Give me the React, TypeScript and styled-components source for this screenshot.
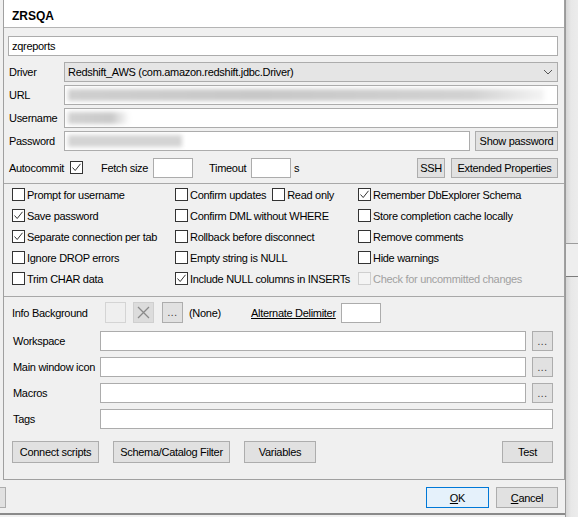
import React from 'react';
import styled, { createGlobalStyle } from 'styled-components';

const GlobalStyle = createGlobalStyle`
  html, body { margin: 0; padding: 0; background: #f0f0f0; }
  body {
    font-family: 'Liberation Sans', Arial, sans-serif;
    font-size: 11px;
    letter-spacing: -0.3px;
    color: #000;
  }
  * { box-sizing: border-box; }
`;

const Page = styled.div`
  width: 578px;
  height: 517px;
  display: flex;
  overflow: hidden;
  background: #f0f0f0;
`;

const Dialog = styled.div`
  width: 566px;
  height: 517px;
  display: flex;
  flex-direction: column;
  border-right: 1px solid #9a9a9a;
`;

const Backdrop = styled.div`
  width: 12px;
  display: flex;
  flex-direction: column;
  background: linear-gradient(to right, #d6d6d6, #e8e8e8 5px, #ececec);
`;

const BackdropBand = styled.div<{ $h: number; $lined?: boolean }>`
  height: ${(p) => p.$h}px;
  flex: ${(p) => (p.$h ? 'none' : 1)};
  border-top: ${(p) => (p.$lined ? '1px solid #9c9c9c' : 'none')};
  border-bottom: ${(p) => (p.$lined ? '1px solid #7c7c7c' : 'none')};
  background: ${(p) => (p.$lined ? '#eeeeee' : 'transparent')};
`;

const Panel = styled.div`
  margin-left: 3px;
  width: 562px;
  height: 480px;
  flex: none;
  display: flex;
  flex-direction: column;
  border-left: 1px solid #a0a0a0;
  border-right: 1px solid #a0a0a0;
  border-bottom: 1px solid #a0a0a0;
`;

const TitleBar = styled.div`
  height: 28px;
  background: #fff;
  border-bottom: 1px solid #b4b4b4;
  padding: 5px 0 0 8px;
  display: flex;
  align-items: center;
  font-weight: bold;
  font-size: 12px;
  letter-spacing: 0;
`;

const FieldsSection = styled.div`
  padding: 8px 6px 5px 4px;
  display: flex;
  flex-direction: column;
  gap: 3px;
  border-bottom: 1px solid #a8a8a8;
`;

const FormRow = styled.div<{ $top?: number }>`
  display: grid;
  grid-template-columns: 56px 1fr;
  align-items: center;
  height: 20px;
  margin-top: ${(p) => p.$top ?? 0}px;
`;

const RowLabel = styled.span`
  padding-left: 1px;
  white-space: nowrap;
`;

const TextBox = styled.div<{ $w?: number; $grow?: boolean }>`
  height: 20px;
  width: ${(p) => (p.$w ? `${p.$w}px` : 'auto')};
  flex: ${(p) => (p.$grow ? 1 : 'none')};
  background: #fff;
  border: 1px solid #acacac;
  display: flex;
  align-items: center;
  padding-left: 3px;
  overflow: hidden;
  white-space: nowrap;
`;

const Combo = styled.div`
  height: 20px;
  background: #e5e5e5;
  border: 1px solid #acacac;
  display: flex;
  align-items: center;
  justify-content: space-between;
  padding: 0 4px 0 3px;
  white-space: nowrap;
`;

const Blur = styled.span<{ $w: number; $tone: string }>`
  display: block;
  width: ${(p) => p.$w}px;
  height: 12px;
  background: ${(p) => p.$tone};
  filter: blur(2px);
`;

const Inline = styled.div`
  display: flex;
  align-items: center;
  gap: 5px;
`;

const Button = styled.div<{ $w: number; $h?: number; $primary?: boolean }>`
  width: ${(p) => p.$w}px;
  height: ${(p) => p.$h ?? 20}px;
  flex: none;
  display: flex;
  align-items: center;
  justify-content: center;
  background: ${(p) => (p.$primary ? '#e5f1fb' : '#e1e1e1')};
  border: 1px solid ${(p) => (p.$primary ? '#0078d7' : '#adadad')};
  white-space: nowrap;
`;

const OptionRow = styled.div`
  display: flex;
  align-items: center;
  height: 21px;
  margin-top: 3px;
  padding-left: 1px;
`;

const Spaced = styled.span<{ $w: number }>`
  width: ${(p) => p.$w}px;
  flex: none;
  white-space: nowrap;
`;

const Gap = styled.span<{ $w: number }>`
  width: ${(p) => p.$w}px;
  flex: none;
`;

const Push = styled.span`
  flex: 1;
`;

const ChecksSection = styled.div`
  display: grid;
  grid-template-columns: 163px 183px 1fr;
  grid-auto-rows: 21px;
  padding: 0 0 7px 8px;
  border-bottom: 1px solid #a8a8a8;
`;

const Check = styled.label<{ $disabled?: boolean }>`
  display: flex;
  align-items: center;
  gap: 2px;
  white-space: nowrap;
  color: ${(p) => (p.$disabled ? '#a0a0a0' : '#000')};
`;

const BoxFrame = styled.span<{ $disabled?: boolean }>`
  width: 13px;
  height: 13px;
  flex: none;
  border: 1px solid ${(p) => (p.$disabled ? '#cfcfcf' : '#333')};
  background: ${(p) => (p.$disabled ? '#f4f4f4' : '#fff')};
  display: flex;
  align-items: center;
  justify-content: center;
`;

const CellPair = styled.div`
  display: flex;
  align-items: center;
  gap: 6px;
`;

const ExtraSection = styled.div`
  flex: 1;
  display: flex;
  flex-direction: column;
  padding: 5px 11px 0 8px;
`;

const InfoRow = styled.div`
  display: flex;
  align-items: center;
  height: 21px;
`;

const Swatch = styled.div`
  width: 21px;
  height: 21px;
  border: 1px solid #d4d4d4;
  background: #efefef;
`;

const IconButton = styled.div<{ $disabled?: boolean }>`
  width: 21px;
  height: 21px;
  flex: none;
  display: flex;
  align-items: center;
  justify-content: center;
  background: ${(p) => (p.$disabled ? '#dcdcdc' : '#e1e1e1')};
  border: 1px solid ${(p) => (p.$disabled ? '#cfcfcf' : '#adadad')};
  color: #333;
  font-size: 10px;
  letter-spacing: 0.5px;
`;

const LinkLabel = styled.span`
  text-decoration: underline;
  white-space: nowrap;
`;

const PathRow = styled.div<{ $top: number }>`
  display: grid;
  grid-template-columns: 88px 1fr 27px;
  align-items: center;
  height: 20px;
  margin-top: ${(p) => p.$top}px;
`;

const PathButton = styled(IconButton)`
  margin-left: 6px;
  height: 20px;
`;

const WideBox = styled(TextBox)`
  grid-column: 2 / 4;
`;

const ActionRow = styled.div`
  display: flex;
  align-items: center;
  margin-top: 12px;
`;

const Footer = styled.div`
  flex: 1;
  display: flex;
  align-items: center;
  padding: 7px 7px 5px 0;
  gap: 7px;
  border-bottom: 2px solid #8a8a8a;
  margin-bottom: 2px;
`;

const ClippedButton = styled(Button)`
  margin-left: -50px;
`;

const Mnemonic = styled.span`
  text-decoration: underline;
`;

function Tick() {
  return (
    <svg width="11" height="11" viewBox="0 0 11 11">
      <polyline points="1.5,5.5 4.2,8.5 9.5,1.8" fill="none" stroke="#333" strokeWidth="1" />
    </svg>
  );
}

function CheckBox(props: { label: string; checked?: boolean; disabled?: boolean }) {
  return (
    <Check $disabled={props.disabled}>
      <BoxFrame $disabled={props.disabled}>{props.checked && <Tick />}</BoxFrame>
      {props.label}
    </Check>
  );
}

function Chevron() {
  return (
    <svg width="10" height="6" viewBox="0 0 10 6">
      <polyline points="1,1 5,5 9,1" fill="none" stroke="#555" strokeWidth="1" />
    </svg>
  );
}

function Cross() {
  return (
    <svg width="13" height="13" viewBox="0 0 13 13">
      <path d="M1 1 L12 12 M12 1 L1 12" stroke="#8a8a8a" strokeWidth="1.3" />
    </svg>
  );
}

export default function App() {
  return (
    <Page>
      <GlobalStyle />
      <Dialog>
        <Panel>
          <TitleBar>ZRSQA</TitleBar>
          <FieldsSection>
            <TextBox>zqreports</TextBox>
            <FormRow $top={3}>
              <RowLabel>Driver</RowLabel>
              <Combo>
                <span>Redshift_AWS (com.amazon.redshift.jdbc.Driver)</span>
                <Chevron />
              </Combo>
            </FormRow>
            <FormRow>
              <RowLabel>URL</RowLabel>
              <TextBox>
                <Blur $w={476} $tone="linear-gradient(to right, #cfcfcf, #c8c8c8 40%, #d2d2d2 85%, #f4f4f4)" />
              </TextBox>
            </FormRow>
            <FormRow>
              <RowLabel>Username</RowLabel>
              <TextBox>
                <Blur $w={62} $tone="linear-gradient(to right, #d2d2d2, #c9c9c9 70%, #ffffff)" />
              </TextBox>
            </FormRow>
            <FormRow>
              <RowLabel>Password</RowLabel>
              <Inline>
                <TextBox $grow>
                  <Blur $w={114} $tone="#d4d4d4" />
                </TextBox>
                <Button $w={83}>Show password</Button>
              </Inline>
            </FormRow>
            <OptionRow>
              <Spaced $w={61}>Autocommit</Spaced>
              <BoxFrame>
                <Tick />
              </BoxFrame>
              <Gap $w={18} />
              <Spaced $w={52}>Fetch size</Spaced>
              <TextBox $w={40} />
              <Gap $w={16} />
              <Spaced $w={42}>Timeout</Spaced>
              <TextBox $w={40} />
              <Gap $w={3} />
              <span>s</span>
              <Push />
              <Button $w={28}>SSH</Button>
              <Gap $w={6} />
              <Button $w={107}>Extended Properties</Button>
            </OptionRow>
          </FieldsSection>

          <ChecksSection>
            <CheckBox label="Prompt for username" />
            <CellPair>
              <CheckBox label="Confirm updates" />
              <CheckBox label="Read only" />
            </CellPair>
            <CheckBox label="Remember DbExplorer Schema" checked />

            <CheckBox label="Save password" checked />
            <CheckBox label="Confirm DML without WHERE" />
            <CheckBox label="Store completion cache locally" />

            <CheckBox label="Separate connection per tab" checked />
            <CheckBox label="Rollback before disconnect" />
            <CheckBox label="Remove comments" />

            <CheckBox label="Ignore DROP errors" />
            <CheckBox label="Empty string is NULL" />
            <CheckBox label="Hide warnings" />

            <CheckBox label="Trim CHAR data" />
            <CheckBox label="Include NULL columns in INSERTs" checked />
            <CheckBox label="Check for uncommitted changes" disabled />
          </ChecksSection>

          <ExtraSection>
            <InfoRow>
              <Spaced $w={93}>Info Background</Spaced>
              <Swatch />
              <Gap $w={7} />
              <IconButton $disabled>
                <Cross />
              </IconButton>
              <Gap $w={8} />
              <IconButton>...</IconButton>
              <Gap $w={6} />
              <Spaced $w={62}>(None)</Spaced>
              <LinkLabel>Alternate Delimiter</LinkLabel>
              <Gap $w={5} />
              <TextBox $w={40} />
            </InfoRow>
            <PathRow $top={8}>
              <RowLabel>Workspace</RowLabel>
              <TextBox />
              <PathButton>...</PathButton>
            </PathRow>
            <PathRow $top={6}>
              <RowLabel>Main window icon</RowLabel>
              <TextBox />
              <PathButton>...</PathButton>
            </PathRow>
            <PathRow $top={6}>
              <RowLabel>Macros</RowLabel>
              <TextBox />
              <PathButton>...</PathButton>
            </PathRow>
            <PathRow $top={6}>
              <RowLabel>Tags</RowLabel>
              <WideBox />
            </PathRow>
            <ActionRow>
              <Button $w={87} $h={22}>Connect scripts</Button>
              <Gap $w={14} />
              <Button $w={117} $h={22}>Schema/Catalog Filter</Button>
              <Gap $w={14} />
              <Button $w={72} $h={22}>Variables</Button>
              <Push />
              <Button $w={51} $h={22}>Test</Button>
            </ActionRow>
          </ExtraSection>
        </Panel>

        <Footer>
          <ClippedButton $w={56} $h={21} />
          <Push />
          <Button $w={63} $h={21} $primary>
            <Mnemonic>O</Mnemonic>K
          </Button>
          <Button $w={62} $h={21}>
            <Mnemonic>C</Mnemonic>ancel
          </Button>
        </Footer>
      </Dialog>
      <Backdrop>
        <BackdropBand $h={243} />
        <BackdropBand $h={34} $lined />
        <BackdropBand $h={0} />
      </Backdrop>
    </Page>
  );
}
